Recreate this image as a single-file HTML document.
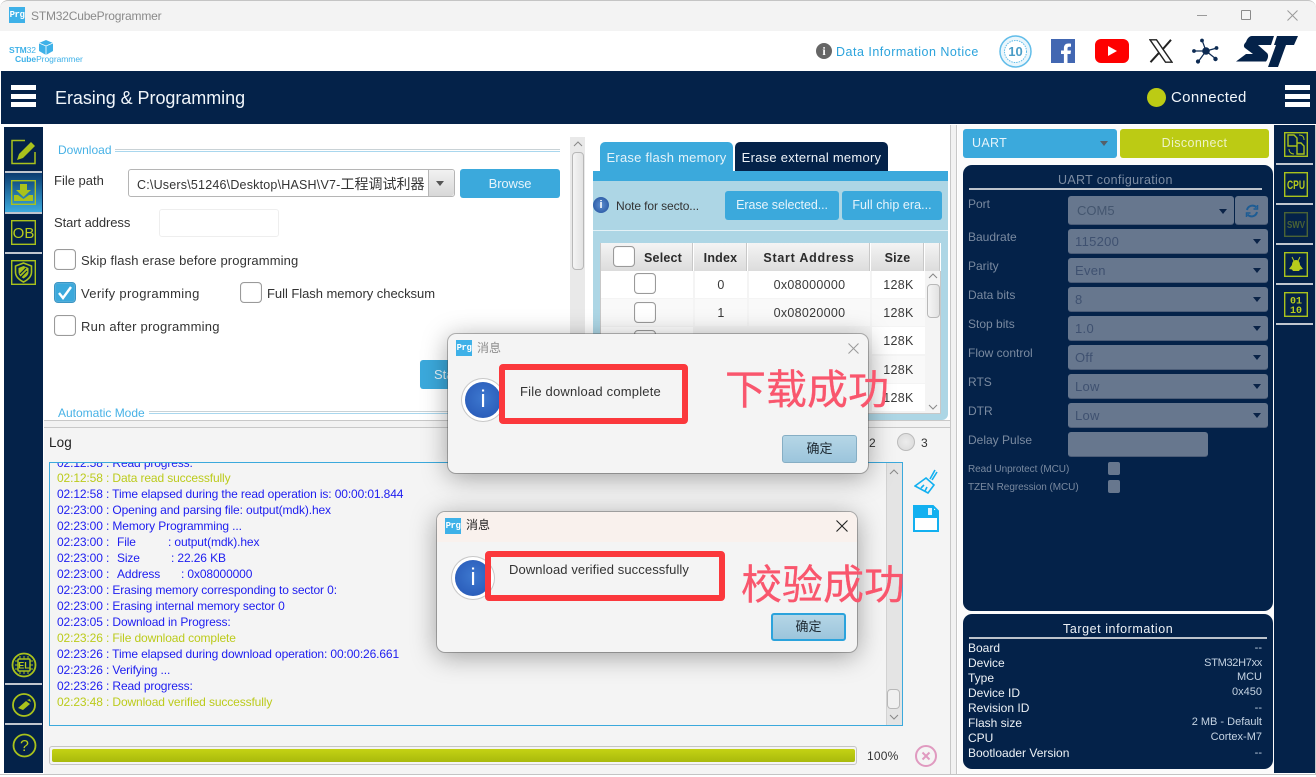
<!DOCTYPE html>
<html lang="zh"><head><meta charset="utf-8"><title>STM32CubeProgrammer</title>
<style>
html,body{margin:0;padding:0;background:#fff}
body{width:1316px;height:777px;overflow:hidden;position:relative;font-family:"Liberation Sans","Noto Sans CJK SC",sans-serif;font-size:13px;color:#333}
div,span,svg{position:absolute;box-sizing:border-box}
.t{white-space:pre;letter-spacing:.1px;line-height:16px;height:16px}
.navy{background:#042249}
.cb{width:22px;height:21px;border:1px solid #9a9a9a;border-radius:4px;background:#fff;box-shadow:inset 0 0 1px #ccc}
.btn{background:#3ba9dc;color:#e6f4fb;border-radius:3px;text-align:center;line-height:27px;letter-spacing:0;white-space:pre}
.log{left:57px;font-size:12px;letter-spacing:-.12px;color:#1d1df0;white-space:pre;line-height:16px;height:16px}
.g{color:#bccb1c}
.lab{left:968px;color:#7a8aa0;font-size:12px;letter-spacing:0;line-height:14px;white-space:pre}
.sel{left:1068px;width:200px;height:25px;background:#67778e;border-radius:3px;border-bottom:1px solid #4c5d78;color:#3f5170;font-size:13px;line-height:26px;padding-left:7px;letter-spacing:.3px}
.sel i{position:absolute;right:7px;top:10px;width:0;height:0;border:4px solid transparent;border-top:5px solid #0a2347;border-left-width:4.5px;border-right-width:4.5px}
.ti{left:968px;color:#eef2f6;font-size:12px;letter-spacing:0;line-height:15px;white-space:pre}
.tv{right:54px;color:#c5d3e2;font-size:11px;letter-spacing:0;line-height:15px;white-space:pre}
.cell{background:#fff;color:#3a3a3a;text-align:center;font-size:12.5px;line-height:28px;letter-spacing:.3px}
.th{background:linear-gradient(#f4f4f4,#dcdcdc);border-right:1px solid #fff;box-shadow:inset -1px 0 #c8c8c8;color:#2b2b2b;font-weight:bold;font-size:12.5px;text-align:center;line-height:30px;letter-spacing:.2px}
.sep{left:5px;width:37px;height:2px;background:#c0c6ce}
.sep2{left:1276px;width:37px;height:2px;background:#c0c6ce}
.dlg{background:#f4f4f4;border-radius:8px;box-shadow:0 4px 26px rgba(0,0,0,.36),0 0 0 1px rgba(90,90,90,.4)}
.okb{width:75px;height:28px;border-radius:3px;background:linear-gradient(#b5d6e6,#9cc5dc);text-align:center;line-height:28px;font-size:13px;color:#1e2a33}
.red{border:6px solid #fb383c;border-radius:4px}
.cn{color:#f9566d;font-size:41px;line-height:50px;white-space:pre;font-family:"Noto Sans CJK SC",sans-serif;font-weight:400;-webkit-text-stroke:.3px #f9566d}
.info{width:36px;height:36px;border-radius:50%;background:radial-gradient(circle at 50% 45%,#3d78cf,#2555b4);box-shadow:0 0 0 3px #fff,0 0 0 4px #c8c8c8;color:#fff;text-align:center;font:24px/36px "Liberation Sans",sans-serif}
.prg{width:16px;height:16px;background:#3eb1e8;color:#fff;font:bold 9px/16px "Liberation Mono",monospace;text-align:center;letter-spacing:-.5px}
</style></head><body>

<!-- title bar -->
<div style="left:0;top:0;width:1316px;height:31px;background:#f3f3f3;border-top:1px solid #c4c4c4;border-radius:8px 8px 0 0"></div>
<div class="prg" style="left:9px;top:7px">Prg</div>
<div class="t" style="left:31px;top:8px;color:#8a8a8a;font-size:12px;letter-spacing:-.19px">STM32CubeProgrammer</div>
<div style="left:1197px;top:15px;width:10px;height:1px;background:#9a9a9a"></div>
<div style="left:1241px;top:10px;width:10px;height:10px;border:1px solid #8a8a8a;border-radius:1px"></div>
<svg style="left:1287px;top:10px" width="11" height="11"><path d="M.5.5l10 10M10.5.5l-10 10" stroke="#999" fill="none"/></svg>

<!-- logo strip -->
<div class="t" style="left:9px;top:44px;color:#3eb1e8;font-size:8.5px;font-weight:bold;letter-spacing:-.1px;height:12px;line-height:12px">STM<span style="position:static;font-weight:normal">32</span></div>
<div class="t" style="left:15px;top:53px;color:#3eb1e8;font-size:8.5px;height:12px;line-height:12px;letter-spacing:-.05px"><b>Cube</b>Programmer</div>
<svg style="left:38px;top:40px" width="16" height="15"><path d="M8 0l7 3v8l-7 4-7-4V3z" fill="#3eb1e8"/><path d="M1 3l7 3 7-3M8 6v9" stroke="#fff" fill="none" stroke-width=".8"/></svg>

<div style="left:816px;top:43px;width:16px;height:16px;border-radius:50%;background:#666;color:#fff;font:bold 12px/16px 'Liberation Serif',serif;text-align:center">i</div>
<div class="t" style="left:836px;top:44px;color:#2ba3dc;font-size:12.5px;letter-spacing:.5px">Data Information Notice</div>
<svg style="left:999px;top:35px" width="33" height="33"><circle cx="16.5" cy="16.5" r="15.5" fill="#eaf6fc" stroke="#62bde9" stroke-width="1.5"/><circle cx="16.5" cy="16.5" r="11" fill="#fff" stroke="#62bde9" stroke-dasharray="1.5 1"/><text x="16.5" y="21" text-anchor="middle" font-size="13" font-weight="bold" fill="#4a9cc6" font-family="Liberation Sans">10</text></svg>
<div style="left:1051px;top:39px;width:24px;height:24px;background:#4267b2"></div>
<svg style="left:1051px;top:39px" width="24" height="24"><path d="M16.5 24v-9h3l.5-3.5h-3.5V9.500c0-1 .4-1.700 1.800-1.700H20V4.700c-.5-.1-1.500-.2-2.600-.2-2.700 0-4.500 1.600-4.500 4.600v2.400H10V15h2.900v9z" fill="#fff"/></svg>
<svg style="left:1095px;top:39px" width="34" height="24"><rect width="34" height="24" rx="6" fill="#fe0000"/><path d="M13 7l9 5-9 5z" fill="#fff"/></svg>
<svg style="left:1149px;top:39px" width="24" height="24"><path d="M1 .8h6.500L23 23.200h-6.500z" fill="none" stroke="#222" stroke-width="1.400"/><path d="M22 .8L13.500 10.500M10 13.800L1.500 23.200" stroke="#222" stroke-width="2" fill="none"/></svg>
<svg style="left:1192px;top:38px" width="27" height="27" stroke="#0c2a52" stroke-width="1.200" fill="#0c2a52"><path d="M14 13L10 2M14 13L25 10M14 13L24 21M14 13L6 24M14 13L2 13" fill="none"/><circle cx="14" cy="13" r="3.200"/><circle cx="10" cy="2.500" r="1.300"/><circle cx="24.500" cy="10" r="1.300"/><circle cx="23.500" cy="21" r="1.600"/><circle cx="6" cy="23.500" r="1.500"/><circle cx="2" cy="13" r="1.300"/></svg>
<svg style="left:1236px;top:35px" width="62" height="32" fill="#042249"><path d="M16 1H38L35 10H22L31 18C33 20 32 24 30 26.500H0L10 19H17L9 13C7 11 8 9 10 7C11 4 13 1 16 1Z"/><path d="M41 1H62L58 10H50L42 32H32L40 10H38Z"/><path d="M52 12H56L50 26H46Z" fill="#fff"/></svg>

<!-- nav bar -->
<div class="navy" style="left:1px;top:71px;width:1315px;height:53px"></div>
<div style="left:11px;top:85px;width:25px;height:5px;background:#fff"></div>
<div style="left:11px;top:94px;width:25px;height:5px;background:#fff"></div>
<div style="left:11px;top:102px;width:25px;height:5px;background:#fff"></div>
<div class="t" style="left:55px;top:88px;color:#f0f5fa;font-size:18px;letter-spacing:-.05px;line-height:20px;height:20px">Erasing &amp; Programming</div>
<div style="left:1147px;top:88px;width:19px;height:19px;border-radius:50%;background:#bccb14"></div>
<div class="t" style="left:1171px;top:89px;color:#f0f5fa;font-size:15px;letter-spacing:.35px;line-height:18px;height:18px">Connected</div>
<div style="left:1285px;top:85px;width:25px;height:5px;background:#fff"></div>
<div style="left:1285px;top:94px;width:25px;height:5px;background:#fff"></div>
<div style="left:1285px;top:102px;width:25px;height:5px;background:#fff"></div>

<!-- left sidebar -->
<div class="navy" style="left:4px;top:127px;width:39px;height:646px"></div>
<svg style="left:11px;top:139px" width="26" height="26"><path d="M24 13v11.500H1V1.500h13" fill="none" stroke="#a9c21c" stroke-width="1.500"/><path d="M6 21l2-6L20 3l4 4-12 12z" fill="#a9c21c"/></svg>
<div class="sep" style="top:171px"></div>
<div style="left:5px;top:173px;width:37px;height:39px;background:linear-gradient(#0b3c70,#3ba9dc)"></div>
<svg style="left:11px;top:180px" width="25" height="25"><rect x=".7" y=".7" width="23.600" height="23.600" fill="none" stroke="#a9c21c" stroke-width="1.400"/><path d="M9 4h7v6h4l-7.500 7L5 10h4z" fill="#a9c21c"/><path d="M3 15h4l5.500 4 5.500-4h4v6H3z" fill="#a9c21c"/></svg>
<div class="sep" style="top:212px"></div>
<svg style="left:11px;top:220px" width="25" height="25"><rect x=".7" y=".7" width="23.600" height="23.600" fill="none" stroke="#a9c21c" stroke-width="1.400"/><text x="12.500" y="18" text-anchor="middle" font-size="15" fill="#b8cc1c" font-family="Liberation Sans">OB</text></svg>
<div class="sep" style="top:252px"></div>
<svg style="left:11px;top:260px" width="25" height="25"><rect x=".7" y=".7" width="23.600" height="23.600" fill="none" stroke="#a9c21c" stroke-width="1.400"/><path d="M12.500 3l8 3v6c0 5-4 8-8 10-4-2-8-5-8-10V6z" fill="none" stroke="#a9c21c" stroke-width="1.600"/><path d="M12.500 6l5 2v4c0 3-2.500 5-5 6.500-2.500-1.500-5-3.500-5-6.500V8z" fill="#a9c21c"/><path d="M9 14l6-6M10 17l6-6" stroke="#042249" stroke-width="1.200"/></svg>
<svg style="left:11px;top:652px" width="26" height="26"><circle cx="13" cy="13" r="11.500" fill="none" stroke="#a9c21c" stroke-width="1.800"/><rect x="7" y="7" width="12" height="12" rx="1" fill="none" stroke="#a9c21c" stroke-width="1.500"/><path d="M9 4v3M13 4v3M17 4v3M9 19v3M13 19v3M17 19v3M4 9h3M4 13h3M4 17h3M19 9h3M19 13h3M19 17h3" stroke="#a9c21c"/><text x="13" y="16.500" text-anchor="middle" font-size="9" font-weight="bold" fill="#b8cc1c" font-family="Liberation Sans">EL</text></svg>
<div class="sep" style="top:683px"></div>
<svg style="left:11px;top:692px" width="26" height="26"><circle cx="13" cy="13" r="11" fill="none" stroke="#a9c21c" stroke-width="1.800"/><path d="M7 16l8-7 4 3-7 6z" fill="#a9c21c"/><path d="M16 8l3-1 1 3" fill="#a9c21c"/></svg>
<div class="sep" style="top:723px"></div>
<svg style="left:12px;top:733px" width="25" height="25"><circle cx="12.500" cy="12.500" r="11" fill="none" stroke="#a9c21c" stroke-width="1.800"/><text x="12.500" y="18" text-anchor="middle" font-size="16" fill="#b8cc1c" font-family="Liberation Sans">?</text></svg>

<!-- download panel -->
<div class="t" style="left:58px;top:142px;color:#48b2e6;font-size:12px;letter-spacing:.02px">Download</div>
<div style="left:115px;top:149px;width:445px;height:3px;border-top:1px solid #c9d2d6;border-bottom:1px solid #a9d7ee"></div>
<div class="t" style="left:54px;top:173px;letter-spacing:0">File path</div>
<div style="left:128px;top:169px;width:327px;height:28px;border:1px solid #b5b5b5;border-radius:3px;background:#fff"></div>
<div class="t" style="left:137px;top:176px;font-size:12.5px;letter-spacing:.2px;width:290px;overflow:hidden;color:#333">C:\Users\51246\Desktop\HASH\V7-<span style="position:static;font-size:14px;letter-spacing:0">工程调试利器</span></div>
<div style="left:428px;top:170px;width:26px;height:26px;background:linear-gradient(#f2f2f2,#d8d8d8);border-left:1px solid #b5b5b5;border-radius:0 3px 3px 0"></div>
<div style="left:436px;top:181px;width:0;height:0;border:4.500px solid transparent;border-top:5px solid #555"></div>
<div class="btn" style="left:460px;top:169px;width:100px;height:29px;line-height:29px;letter-spacing:-.1px">Browse</div>
<div class="t" style="left:54px;top:215px;letter-spacing:-.08px">Start address</div>
<div style="left:159px;top:209px;width:120px;height:28px;border:1px solid #eee;border-radius:3px"></div>
<div class="cb" style="left:54px;top:249px"></div>
<div class="t" style="left:81px;top:253px;letter-spacing:.12px">Skip flash erase before programming</div>
<div class="cb" style="left:54px;top:282px;background:#3ba9dc;border-color:#3b95c4"></div>
<svg style="left:57px;top:285px" width="16" height="16"><path d="M2 8l4 5 8-11" fill="none" stroke="#fff" stroke-width="2.400"/></svg>
<div class="t" style="left:81px;top:286px;letter-spacing:.33px">Verify programming</div>
<div class="cb" style="left:240px;top:282px"></div>
<div class="t" style="left:267px;top:286px;letter-spacing:-.04px">Full Flash memory checksum</div>
<div class="cb" style="left:54px;top:315px"></div>
<div class="t" style="left:81px;top:319px;letter-spacing:.24px">Run after programming</div>
<div class="btn" style="left:420px;top:360px;width:100px;height:29px;line-height:29px;text-align:left;padding-left:14px">Start Programming</div>
<div class="t" style="left:58px;top:405px;color:#48b2e6;font-size:12px;letter-spacing:0">Automatic Mode</div>
<div style="left:149px;top:411px;width:420px;height:3px;border-top:1px solid #c9d2d6;border-bottom:1px solid #a9d7ee"></div>
<div style="left:570px;top:137px;width:15px;height:290px;background:#e9e9e9"></div>
<div style="left:572px;top:152px;width:12px;height:118px;background:linear-gradient(90deg,#f5f5f5,#e2e2e2);border:1px solid #b8b8b8;border-radius:4px"></div>
<svg style="left:573px;top:141px" width="10" height="6"><path d="M1 5l4-4 4 4" fill="none" stroke="#888"/></svg>

<!-- erase panel -->
<div style="left:600px;top:142px;width:133px;height:30px;background:#3ba9dc;border-radius:5px 5px 0 0;color:#e4f3fa;text-align:center;line-height:31px;font-size:13px;letter-spacing:.25px">Erase flash memory</div>
<div class="navy" style="left:735px;top:142px;width:153px;height:30px;border-radius:5px 5px 0 0;color:#eef3f8;text-align:center;line-height:31px;font-size:13px;letter-spacing:.25px">Erase external memory</div>
<div style="left:593px;top:171px;width:355px;height:10px;background:#3ba9dc"></div>
<div style="left:593px;top:181px;width:355px;height:239px;background:#add6e5;border-radius:0 0 6px 0"></div>
<div style="left:593px;top:230px;width:355px;height:1px;background:#e3f1f6"></div>
<div style="left:593px;top:197px;width:16px;height:16px;border-radius:50%;background:radial-gradient(circle,#5d8fd0,#1f4d9a);color:#fff;font:bold 11px/16px 'Liberation Sans',sans-serif;text-align:center">i</div>
<div class="t" style="left:616px;top:198px;font-size:12px;letter-spacing:-.1px;color:#333">Note for secto...</div>
<div class="btn" style="left:725px;top:191px;width:114px;height:29px;line-height:29px;font-size:12.5px;letter-spacing:-.08px">Erase selected...</div>
<div class="btn" style="left:842px;top:191px;width:100px;height:29px;line-height:29px;font-size:12.5px;letter-spacing:.05px">Full chip era...</div>
<div style="left:600px;top:243px;width:341px;height:171px;background:#f4f4f4;border:1px solid #c8c8c8"></div>
<div class="th" style="left:601px;top:243px;width:93px;height:28px;text-align:left;padding-left:43px">Select</div>
<div class="cb" style="left:613px;top:246px"></div>
<div class="th" style="left:694px;top:243px;width:54px;height:28px">Index</div>
<div class="th" style="left:748px;top:243px;width:123px;height:28px;letter-spacing:.75px">Start Address</div>
<div class="th" style="left:871px;top:243px;width:54px;height:28px">Size</div>
<div class="th" style="left:925px;top:243px;width:16px;height:28px"></div>

<div class="cell" style="left:601px;top:271px;width:92px;height:27px"></div>
<div class="cell" style="left:695px;top:271px;width:52px;height:27px">0</div>
<div class="cell" style="left:749px;top:271px;width:121px;height:27px">0x08000000</div>
<div class="cell" style="left:872px;top:271px;width:53px;height:27px">128K</div>
<div class="cb" style="left:634px;top:273px"></div>
<div class="cell" style="left:601px;top:299px;width:92px;height:27px;background:#f9f9f9"></div>
<div class="cell" style="left:695px;top:299px;width:52px;height:27px;background:#f9f9f9">1</div>
<div class="cell" style="left:749px;top:299px;width:121px;height:27px;background:#f9f9f9">0x08020000</div>
<div class="cell" style="left:872px;top:299px;width:53px;height:27px;background:#f9f9f9">128K</div>
<div class="cb" style="left:634px;top:302px"></div>
<div class="cell" style="left:601px;top:327px;width:92px;height:27px"></div>
<div class="cell" style="left:872px;top:327px;width:53px;height:27px">128K</div>
<div class="cb" style="left:634px;top:330px"></div>
<div class="cell" style="left:872px;top:356px;width:53px;height:27px;background:#f9f9f9">128K</div>
<div class="cell" style="left:872px;top:384px;width:53px;height:27px">128K</div>
<svg style="left:928px;top:273px" width="10" height="6"><path d="M1 5l4-4 4 4" fill="none" stroke="#888"/></svg>
<div style="left:927px;top:284px;width:13px;height:34px;background:linear-gradient(90deg,#f5f5f5,#e2e2e2);border:1px solid #b8b8b8;border-radius:4px"></div>
<svg style="left:928px;top:404px" width="10" height="6"><path d="M1 1l4 4 4-4" fill="none" stroke="#888"/></svg>

<!-- dividers -->
<div style="left:950px;top:125px;width:7px;height:650px;background:#f2f2f2;border-left:1px solid #c8c8c8;border-right:1px solid #c8c8c8"></div>
<div style="left:44px;top:420px;width:906px;height:8px;background:#f2f2f2;border-top:1px solid #c8c8c8;border-bottom:1px solid #c8c8c8"></div>

<!-- log -->
<div style="left:44px;top:428px;width:906px;height:346px;background:#f4f4f4"></div>
<div class="t" style="left:49px;top:435px;color:#222;font-size:13.5px;letter-spacing:.1px">Log</div>
<div style="left:897px;top:433px;width:18px;height:18px;border-radius:50%;border:1px solid #bbb;background:radial-gradient(circle,#ececec,#d8d8d8)"></div>
<div class="t" style="left:921px;top:435px;color:#333;font-size:12px">3</div>
<div class="t" style="left:869px;top:435px;color:#333;font-size:12px">2</div>
<div style="left:49px;top:462px;width:854px;height:264px;border:1px solid #3ba9dc;background:#f4f4f4;overflow:hidden"></div>
<div style="left:50px;top:463px;width:852px;height:262px;overflow:hidden">
<div class="log" style="left:7px;top:-8px">02:12:58 : Read progress:</div>
<div class="log g" style="left:7px;top:7px">02:12:58 : Data read successfully</div>
<div class="log" style="left:7px;top:23px">02:12:58 : Time elapsed during the read operation is: 00:00:01.844</div>
<div class="log" style="left:7px;top:39px">02:23:00 : Opening and parsing file: output(mdk).hex</div>
<div class="log" style="left:7px;top:55px">02:23:00 : Memory Programming ...</div>
<div class="log" style="left:7px;top:71px">02:23:00 :</div><div class="log" style="left:67px;top:71px">File</div><div class="log" style="left:118px;top:71px">: output(mdk).hex</div>
<div class="log" style="left:7px;top:87px">02:23:00 :</div><div class="log" style="left:67px;top:87px">Size</div><div class="log" style="left:121px;top:87px">: 22.26 KB</div>
<div class="log" style="left:7px;top:103px">02:23:00 :</div><div class="log" style="left:67px;top:103px">Address</div><div class="log" style="left:131px;top:103px">: 0x08000000</div>
<div class="log" style="left:7px;top:119px">02:23:00 : Erasing memory corresponding to sector 0:</div>
<div class="log" style="left:7px;top:135px">02:23:00 : Erasing internal memory sector 0</div>
<div class="log" style="left:7px;top:151px">02:23:05 : Download in Progress:</div>
<div class="log g" style="left:7px;top:167px">02:23:26 : File download complete</div>
<div class="log" style="left:7px;top:183px">02:23:26 : Time elapsed during download operation: 00:00:26.661</div>
<div class="log" style="left:7px;top:199px">02:23:26 : Verifying ...</div>
<div class="log" style="left:7px;top:215px">02:23:26 : Read progress:</div>
<div class="log g" style="left:7px;top:231px">02:23:48 : Download verified successfully</div>
</div>
<div style="left:886px;top:463px;width:16px;height:262px;background:#e4e4e4;border-left:1px solid #d2d2d2"></div>
<svg style="left:889px;top:469px" width="10" height="6"><path d="M1 5l4-4 4 4" fill="none" stroke="#888"/></svg>
<div style="left:887px;top:689px;width:13px;height:20px;background:#f0f0f0;border:1px solid #b8b8b8;border-radius:4px"></div>
<svg style="left:889px;top:714px" width="10" height="6"><path d="M1 1l4 4 4-4" fill="none" stroke="#888"/></svg>
<svg style="left:914px;top:468px" width="24" height="26" fill="none" stroke="#12b0f0" stroke-width="1.600"><path d="M21 2l-5 9M23 4l-5 8"/><path d="M12 10l8 7-6 8L1 18z"/><path d="M7 20l3-3M11 23l2-4"/></svg>
<svg style="left:913px;top:505px" width="26" height="27"><path d="M1 1h19l5 5v20H1z" fill="#fff" stroke="#12b0f0" stroke-width="2"/><rect x="1" y="1" width="20" height="12" fill="#12b0f0"/><rect x="21" y="5" width="3" height="8" fill="#12b0f0"/><rect x="15" y="3" width="4" height="7" fill="#dff3fc"/></svg>

<div style="left:49px;top:746px;width:808px;height:19px;border:1px solid #c5c5c5;border-radius:3px;background:#f4f4f4"></div>
<div style="left:52px;top:749px;width:803px;height:13px;background:linear-gradient(#c4d214,#a9ba0c);border-radius:2px"></div>
<div class="t" style="left:867px;top:748px;font-size:12px;color:#333;letter-spacing:.2px">100%</div>
<div style="left:915px;top:745px;width:22px;height:22px;border-radius:50%;border:2.5px solid #e09ac0"></div>
<svg style="left:921px;top:751px" width="10" height="10"><path d="M1.5 1.500l7 7M8.500 1.500l-7 7" stroke="#e09ac0" stroke-width="2"/></svg>

<!-- right column -->
<div style="left:958px;top:125px;width:318px;height:650px;background:#fbfbfb"></div>
<div class="btn" style="left:963px;top:129px;width:154px;height:29px;line-height:29px;text-align:left;padding-left:9px;font-size:12.5px;letter-spacing:.3px">UART</div>
<div style="left:1100px;top:141px;width:0;height:0;border:4px solid transparent;border-top:5px solid #55606a"></div>
<div class="btn" style="left:1120px;top:129px;width:149px;height:29px;line-height:29px;background:#bccb14;font-size:12.5px;color:#eef3c8;letter-spacing:.38px">Disconnect</div>

<div class="navy" style="left:963px;top:165px;width:310px;height:446px;border-radius:9px"></div>
<div class="t" style="left:1058px;top:172px;color:#7c8ca2;font-size:12.5px;letter-spacing:.34px">UART configuration</div>
<div style="left:969px;top:188px;width:293px;height:2px;background:#bcc3cc"></div>
<div class="lab" style="top:197px">Port</div>
<div class="sel" style="top:196px;width:166px;height:29px;line-height:29px;padding-left:9px;color:#44566f;letter-spacing:0">COM5<i style="top:13px"></i></div>
<div class="sel" style="left:1235px;top:196px;width:33px;height:29px"></div>
<svg style="left:1245px;top:204px" width="14" height="14" fill="none" stroke="#1d5c94" stroke-width="2"><path d="M2 6a5.500 5.500 0 0 1 9.500-2.500M12 8a5.500 5.500 0 0 1-9.500 2.500"/><path d="M12.500 1v4h-4M1.500 13V9h4" stroke-width="1.500"/></svg>
<div class="lab" style="top:230px">Baudrate</div><div class="sel" style="top:229px">115200<i></i></div>
<div class="lab" style="top:259px">Parity</div><div class="sel" style="top:258px">Even<i></i></div>
<div class="lab" style="top:288px">Data bits</div><div class="sel" style="top:287px">8<i></i></div>
<div class="lab" style="top:317px">Stop bits</div><div class="sel" style="top:316px">1.0<i></i></div>
<div class="lab" style="top:346px">Flow control</div><div class="sel" style="top:345px">Off<i></i></div>
<div class="lab" style="top:375px">RTS</div><div class="sel" style="top:374px">Low<i></i></div>
<div class="lab" style="top:404px">DTR</div><div class="sel" style="top:403px">Low<i></i></div>
<div class="lab" style="top:433px">Delay Pulse</div><div class="sel" style="top:432px;width:140px"></div>
<div class="lab" style="top:463px;font-size:10px;letter-spacing:-.05px">Read Unprotect (MCU)</div>
<div style="left:1108px;top:462px;width:12px;height:13px;background:#67778e;border-radius:2px"></div>
<div class="lab" style="top:481px;font-size:10px;letter-spacing:-.05px">TZEN Regression (MCU)</div>
<div style="left:1108px;top:480px;width:12px;height:13px;background:#67778e;border-radius:2px"></div>

<div class="navy" style="left:963px;top:614px;width:310px;height:155px;border-radius:9px"></div>
<div class="t" style="left:1063px;top:621px;color:#eef2f6;font-size:12.5px;letter-spacing:.57px">Target information</div>
<div style="left:969px;top:637px;width:298px;height:2px;background:#bcc3cc"></div>
<div class="ti" style="top:641px">Board</div><div class="tv" style="top:641px">--</div>
<div class="ti" style="top:656px">Device</div><div class="tv" style="top:656px;letter-spacing:-.3px">STM32H7xx</div>
<div class="ti" style="top:671px">Type</div><div class="tv" style="top:670px">MCU</div>
<div class="ti" style="top:686px">Device ID</div><div class="tv" style="top:685px">0x450</div>
<div class="ti" style="top:701px">Revision ID</div><div class="tv" style="top:701px">--</div>
<div class="ti" style="top:716px">Flash size</div><div class="tv" style="top:715px">2 MB - Default</div>
<div class="ti" style="top:731px">CPU</div><div class="tv" style="top:730px">Cortex-M7</div>
<div class="ti" style="top:746px">Bootloader Version</div><div class="tv" style="top:746px">--</div>

<!-- right sidebar -->
<div class="navy" style="left:1274px;top:125px;width:41px;height:648px"></div>
<div style="left:1315px;top:125px;width:1px;height:650px;background:#c8c8c8"></div>
<svg style="left:1284px;top:132px" width="24" height="25"><rect x=".7" y=".7" width="22.600" height="23.600" fill="none" stroke="#a9c21c" stroke-width="1.400"/><path d="M4 3h6l3 3v8H4zM13 11h4l3 3v8h-7z" fill="none" stroke="#a9c21c" stroke-width="1.400"/><path d="M15 3c3 0 5 1 5 5M5 17c0 3 2 5 5 5" fill="none" stroke="#a9c21c"/></svg>
<div class="sep2" style="top:163px"></div>
<svg style="left:1284px;top:172px" width="24" height="25"><rect x=".7" y=".7" width="22.600" height="23.600" fill="none" stroke="#a9c21c" stroke-width="1.400"/><text x="12" y="17" text-anchor="middle" font-size="12" font-weight="bold" fill="#b8cc1c" font-family="Liberation Sans" textLength="18" lengthAdjust="spacingAndGlyphs">CPU</text></svg>
<div class="sep2" style="top:203px"></div>
<svg style="left:1284px;top:212px" width="24" height="25"><rect x=".7" y=".7" width="22.600" height="23.600" fill="none" stroke="#4b6335" stroke-width="1.400"/><text x="12" y="16" text-anchor="middle" font-size="10" font-weight="bold" fill="#4b6335" font-family="Liberation Sans" textLength="18" lengthAdjust="spacingAndGlyphs">SWV</text></svg>
<div class="sep2" style="top:243px"></div>
<svg style="left:1284px;top:252px" width="24" height="25"><rect x=".7" y=".7" width="22.600" height="23.600" fill="none" stroke="#a9c21c" stroke-width="1.400"/><path d="M8 5l2 4M16 5l-2 4" stroke="#b8cc1c"/><path d="M12 8c3 0 4 3 4 5l3 4-3 .5-1 1.500H9l-1-1.500L5 17l3-4c0-2 1-5 4-5z" fill="#b8cc1c"/></svg>
<div class="sep2" style="top:283px"></div>
<svg style="left:1284px;top:292px" width="24" height="25"><rect x=".7" y=".7" width="22.600" height="23.600" fill="none" stroke="#a9c21c" stroke-width="1.400"/><text x="12" y="11.500" text-anchor="middle" font-size="10" font-weight="bold" fill="#b8cc1c" font-family="Liberation Mono">01</text><text x="12" y="21" text-anchor="middle" font-size="10" font-weight="bold" fill="#b8cc1c" font-family="Liberation Mono">10</text></svg>
<div class="sep2" style="top:323px"></div>

<!-- window bottom edge -->
<div style="left:0;top:774px;width:1316px;height:1px;background:#c4c4c4"></div>

<!-- dialog 1 -->
<div class="dlg" style="left:448px;top:334px;width:420px;height:139px"></div>
<div class="prg" style="left:456px;top:340px">Prg</div>
<div style="left:477px;top:340px;color:#8d8d8d;font-size:12px;line-height:16px;font-family:'Noto Sans CJK SC',sans-serif">消息</div>
<svg style="left:848px;top:343px" width="11" height="11"><path d="M.5.5l10 10M10.500.5l-10 10" stroke="#999" fill="none"/></svg>
<div class="info" style="left:465px;top:382px">i</div>
<div class="red" style="left:499px;top:364px;width:189px;height:60px"></div>
<div class="t" style="left:520px;top:384px;color:#333;letter-spacing:.2px">File download complete</div>
<div class="cn" style="left:725px;top:361px">下载成功</div>
<div class="okb" style="left:782px;top:435px;border:1px solid #86aec4;height:28px;line-height:26px">确定</div>

<!-- dialog 2 -->
<div class="dlg" style="left:437px;top:512px;width:420px;height:140px"></div>
<div style="left:437px;top:512px;width:420px;height:30px;background:#f9f1ed;border-radius:8px 8px 0 0"></div>
<div class="prg" style="left:445px;top:518px">Prg</div>
<div style="left:466px;top:517px;color:#222;font-size:12px;line-height:16px;font-family:'Noto Sans CJK SC',sans-serif">消息</div>
<svg style="left:836px;top:520px" width="12" height="12"><path d="M.5.5l11 11M11.500.5l-11 11" stroke="#222" fill="none" stroke-width="1.100"/></svg>
<div class="info" style="left:455px;top:560px">i</div>
<div class="red" style="left:485px;top:551px;width:240px;height:50px"></div>
<div class="t" style="left:509px;top:562px;color:#333;letter-spacing:.1px">Download verified successfully</div>
<div class="cn" style="left:741px;top:556px">校验成功</div>
<div class="okb" style="left:771px;top:613px;border:2px solid #2ba3dc;line-height:24px">确定</div>
</body></html>
